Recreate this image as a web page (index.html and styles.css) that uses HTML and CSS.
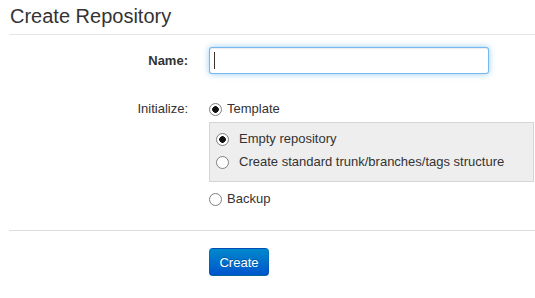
FILE: index.html
```html
<!DOCTYPE html>
<html lang="en">
<head>
    <meta charset="UTF-8">
    <title>Create Repository</title>
    <link rel="stylesheet" href="styles.css">
</head>
<body>
    <div class="page">
        <h1 class="page-title">Create Repository</h1>

        <form class="repo-form">
            <div class="field field-name">
                <label class="field-label bold" for="repoName">Name:</label>
                <div class="field-control">
                    <span class="input-wrap">
                        <input type="text" id="repoName" class="text-input">
                    </span>
                </div>
            </div>

            <div class="field field-init">
                <span class="field-label">Initialize:</span>
                <div class="field-control">
                    <label class="option">
                        <input type="radio" name="init" class="radio" checked>
                        Template
                    </label>

                    <div class="template-box">
                        <label class="option">
                            <input type="radio" name="template" class="radio" checked>
                            Empty repository
                        </label>
                        <label class="option">
                            <input type="radio" name="template" class="radio">
                            Create standard trunk/branches/tags structure
                        </label>
                    </div>

                    <label class="option option-backup">
                        <input type="radio" name="init" class="radio">
                        Backup
                    </label>
                </div>
            </div>

            <div class="form-actions">
                <button type="button" class="btn-primary">Create</button>
            </div>
        </form>
    </div>
</body>
</html>
```

FILE: styles.css
```css
body {
    margin: 0;
    font-family: "Liberation Sans", Arial, sans-serif;
    font-size: 13px;
    color: #333;
    background-color: #fff;
}
.page {
    padding-left: 9px;
}
.page-title {
    margin: 0;
    padding: 4px 0 6px 1px;
    font-size: 20px;
    line-height: 24px;
    font-weight: normal;
    color: #333;
    border-bottom: 1px solid #e5e5e5;
}
.field {
    display: grid;
    grid-template-columns: 180px 1fr;
    column-gap: 20px;
}
.field-label {
    text-align: right;
    line-height: 20px;
    padding-right: 1px;
}
.field-label.bold {
    font-weight: bold;
}
.field-name {
    margin-top: 12px;
    align-items: center;
}
.input-wrap {
    position: relative;
    display: block;
    width: 280px;
}
.input-wrap::after {
    content: "";
    position: absolute;
    left: 5px;
    top: 5px;
    width: 1px;
    height: 17px;
    background-color: #333;
}
.text-input {
    display: block;
    width: 280px;
    height: 27px;
    box-sizing: border-box;
    margin: 0;
    padding: 4px 6px;
    border: 1px solid rgba(82, 168, 236, 0.8);
    border-radius: 3px;
    box-shadow: inset 0 1px 1px rgba(0, 0, 0, 0.075), 0 0 6px rgba(82, 168, 236, 0.6);
    outline: none;
    font: inherit;
    caret-color: transparent;
}
.field-init {
    margin-top: 25px;
}
.option {
    display: flex;
    align-items: center;
    gap: 5px;
    height: 20px;
    line-height: 20px;
}
.radio {
    appearance: none;
    -webkit-appearance: none;
    width: 13px;
    height: 13px;
    margin: 0;
    border: 1px solid #808080;
    border-radius: 50%;
    background-color: #fff;
    box-sizing: border-box;
    flex: none;
}
.radio:checked {
    background: radial-gradient(circle, #111 0, #111 3px, #fff 3.6px);
}
.template-box {
    margin: 3px 1px 0 0;
    padding: 6px 6px 9px;
    background-color: #eee;
    border: 1px solid #d5d5d5;
    display: flex;
    flex-direction: column;
    gap: 3px;
}
.template-box .option {
    gap: 10px;
}
.option-backup {
    margin-top: 7px;
}
.form-actions {
    margin-top: 21px;
    padding: 17px 0 0 200px;
    border-top: 1px solid #ddd;
}
.btn-primary {
    width: 60px;
    height: 28px;
    padding: 0;
    font: inherit;
    color: #fff;
    text-shadow: 0 -1px 0 rgba(0, 0, 0, 0.25);
    background-color: #0074cc;
    background-image: linear-gradient(#0088cc, #0055cc);
    border: 1px solid rgba(0, 0, 0, 0.1);
    border-bottom-color: rgba(0, 0, 0, 0.25);
    border-radius: 4px;
    cursor: pointer;
}
```
